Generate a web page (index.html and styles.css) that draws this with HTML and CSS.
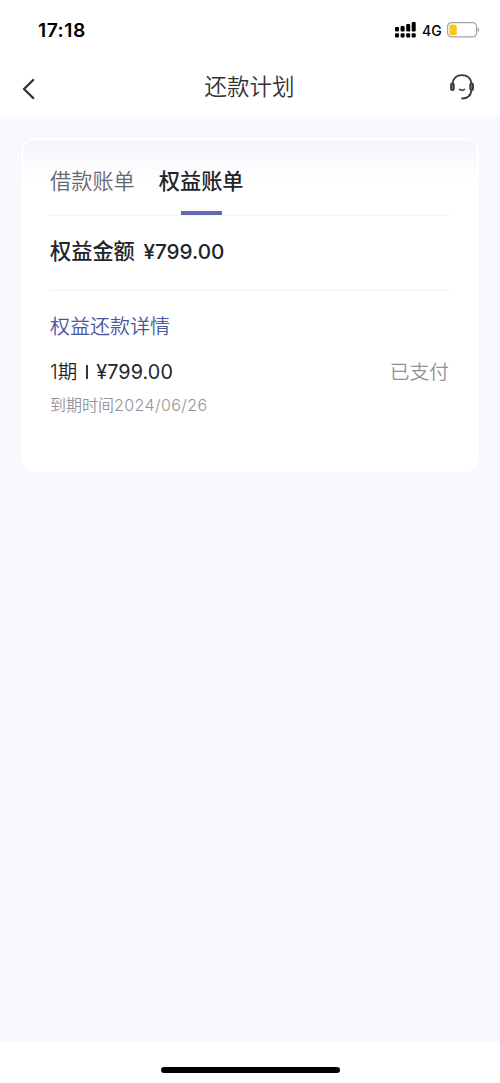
FILE: index.html
```html
<!DOCTYPE html>
<html lang="zh-CN">
<head>
<meta charset="utf-8">
<title>还款计划</title>
<link rel="stylesheet" href="styles.css">
</head>
<body>
<div class="status">
  <span class="time">17:18</span>
  <svg class="signal" width="21" height="16" viewBox="0 0 21 16">
    <rect x="0" y="5" width="4" height="4.6" rx="1"/><rect x="5.6" y="4" width="4" height="5.6" rx="1"/><rect x="11.2" y="2" width="4" height="7.6" rx="1"/><rect x="16.7" y="0" width="4" height="9.6" rx="1"/>
    <rect x="0" y="11.2" width="4" height="4.2" rx="1"/><rect x="5.6" y="11.2" width="4" height="4.2" rx="1"/><rect x="11.2" y="11.2" width="4" height="4.2" rx="1"/><rect x="16.7" y="11.2" width="4" height="4.2" rx="1"/>
  </svg>
  <span class="network">4G</span>
  <svg class="battery" width="33" height="16" viewBox="0 0 33 16">
    <rect x="0.6" y="0.6" width="29" height="14.3" rx="4" fill="#fff" stroke="#a3a3a3" stroke-width="1.2"/>
    <rect x="2.4" y="2.4" width="7.4" height="10.8" rx="2" fill="#f8ca18"/>
    <path d="M30.8 5.5c1.8.8 1.8 3.7 0 4.5z" fill="#999"/>
  </svg>
</div>
<header class="header">
  <svg class="back" width="14" height="22" viewBox="0 0 14 22"><path d="M11.2 2L2 11l9.2 9" fill="none" stroke="#333" stroke-width="2.4" stroke-linecap="round" stroke-linejoin="round"/></svg>
  <h1 class="title">还款计划</h1>
  <svg class="service" width="24" height="26" viewBox="0 0 24 26" fill="none" stroke="#3a3a3c" stroke-width="1.8" stroke-linecap="round">
    <path d="M2.5 9C3.5 4.1 7.2 1.2 12 1.2s8.5 2.9 9.5 7.8"/>
    <rect x="1" y="9.3" width="2.8" height="6.8" rx="1.4" fill="#77777a"/><rect x="20.2" y="9.3" width="2.8" height="6.8" rx="1.4" fill="#77777a"/>
    <path d="M21.5 16.5c-.8 5-4.5 8-9.4 8"/>
    <path d="M9.5 15.4c1.4.9 3.6.9 5 0" stroke-width="1.6"/>
  </svg>
</header>
<main class="content">
  <section class="card">
    <nav class="tabs"><span class="tab">借款账单</span><span class="tab active">权益账单</span></nav>
    <div class="amount">权益金额 <span class="money">¥799.00</span></div>
    <h2 class="subtitle">权益还款详情</h2>
    <div class="bill"><span class="term">1期 <i class="separator"></i> <span class="price">¥799.00</span></span><span class="paid">已支付</span></div>
    <div class="due">到期时间<span class="date">2024/06/26</span></div>
  </section>
</main>
<footer class="footer"><div class="home"></div></footer>
</body>
</html>
```
FILE: styles.css
```css
* { box-sizing: border-box; }
body {
  margin: 0;
  height: 1083px;
  display: flex;
  flex-direction: column;
  background: #fff;
  color: #22242c;
  font-family: Inter, "Noto Sans CJK SC", sans-serif;
  white-space: nowrap;
}
.status {
  height: 60px;
  padding: 0 20px 0 38px;
  display: flex;
  align-items: center;
  color: #000;
}
.time { font-size: 19.3px; font-weight: 600; letter-spacing: .5px; margin-right: auto; }
.signal { margin-right: 6px; }
.network { font-size: 14px; font-weight: 500; width: 20px; margin-right: 5px; }
.header {
  height: 57px;
  padding: 0 26px 3px 22px;
  display: flex;
  align-items: center;
  justify-content: space-between;
}
.back { margin-top: 4px; margin-right: 13px; }
.title { margin: 0; font-size: 22.5px; font-weight: 350; line-height: 32px; color: #333; }
.content { flex: 1; padding: 21px; background: #f8f9fe; }
.card {
  height: 334px;
  padding: 0 27px;
  border: 2px solid #fff;
  border-radius: 14px;
  background: linear-gradient(#f4f5fc, #fff 42px);
  box-shadow: 0 1px 5px rgba(80, 90, 180, .025);
}
.tabs {
  height: 76px;
  display: flex;
  gap: 24px;
  border-bottom: 1px solid #f5f5f7;
}
.tab {
  position: relative;
  padding-top: 25px;
  font-size: 21.2px;
  line-height: 32px;
  font-weight: 350;
  color: #66676c;
}
.active { font-weight: 500; color: #22242c; }
.active::after {
  content: "";
  position: absolute;
  bottom: 0;
  left: 22px;
  width: 41px;
  height: 4px;
  background: #6268b8;
}
.amount {
  height: 75px;
  padding-top: 19px;
  border-bottom: 1px solid #f1f1f4;
  font-size: 21.2px;
  line-height: 32px;
  font-weight: 500;
}
.money { margin-left: 3px; font-size: 20.7px; }
.subtitle {
  margin: 21px 0 0;
  font-size: 20px;
  line-height: 30px;
  font-weight: 350;
  color: #4a56a2;
}
.bill {
  margin-top: 15px;
  display: flex;
  justify-content: space-between;
  font-size: 19.5px;
  line-height: 30px;
  font-weight: 350;
}
.separator { display: inline-block; width: 2px; height: 14px; margin: 0 3px; background: #36373b; }
.price { font-size: 19.8px; font-weight: 380; letter-spacing: .12px; }
.paid { margin-right: 1px; font-size: 19.8px; color: #929294; }
.due {
  margin-top: 6px;
  font-size: 16px;
  line-height: 24px;
  font-weight: 350;
  color: #949498;
}
.date { letter-spacing: .4px; }
.footer {
  height: 41px;
  padding-top: 25px;
  display: flex;
  justify-content: center;
}
.home { width: 179px; height: 6px; border-radius: 3px; background: #000; }
```
